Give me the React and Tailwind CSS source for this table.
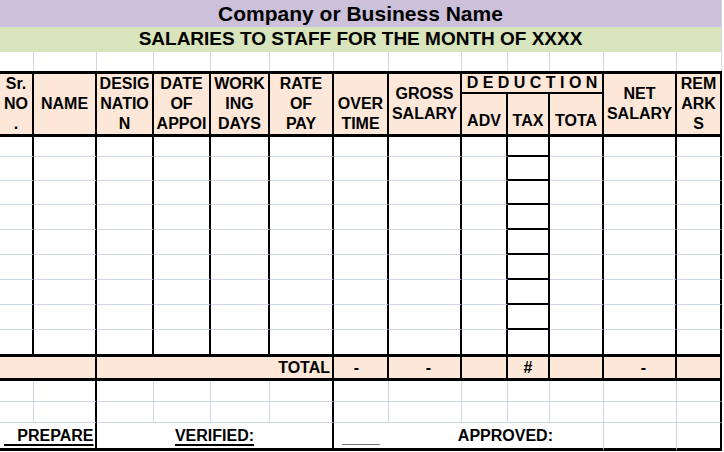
const grid = "#d0d7e5";

const headCols = [
  { lines: ["Sr.", "NO", "."] },
  { lines: ["NAME"] },
  { lines: ["DESIG", "NATIO", "N"] },
  { lines: ["DATE", "OF", "APPOI"] },
  { lines: ["WORK", "ING", "DAYS"] },
  { lines: ["RATE", "OF", "PAY"] },
  { lines: ["OVER", "TIME"], bottom: true },
  { lines: ["GROSS", "SALARY"] },
];

const dataRows = Array.from({ length: 9 }, (_, i) => i);
const cols = Array.from({ length: 13 }, (_, i) => i);

function HeadCell({ lines, bottom, className = "" }) {
  return (
    <div
      className={`flex flex-col items-center overflow-hidden border-t-[3px] border-b-[3px] border-r-2 border-black bg-[#fce7d9] leading-[20px] ${
        bottom ? "justify-end" : "justify-center"
      } ${className}`}
    >
      {lines.map((l) => (
        <span key={l} className="whitespace-nowrap">
          {l}
        </span>
      ))}
    </div>
  );
}

export default function App() {
  return (
    <div className="w-[724px] h-[452px] overflow-hidden bg-white font-['Liberation_Sans',Arial,sans-serif] font-bold text-black text-[16px]">
      <div className="grid w-[722px] grid-cols-[34px_63px_57px_57px_59px_64px_55px_73px_46px_42px_54px_73px_45px] grid-rows-[27px_25px_19px_23px_21px_22px_20px_24px_24px_25px_25px_25px_25px_25px_24px_27px_21px_21px_28px]">
        {/* title rows */}
        <div className="col-span-13 flex items-center justify-center bg-[#ccc0da] text-[21px] border-r border-r-[#d0d7e5]">
          Company or Business Name
        </div>
        <div className="col-span-13 flex items-center justify-center bg-[#d8e4bc] text-[19px] border-r border-r-[#d0d7e5]">
          SALARIES TO STAFF FOR THE MONTH OF XXXX
        </div>
        {cols.map((c) => (
          <div key={"b" + c} className="border-r border-r-[#d0d7e5]" />
        ))}

        {/* header */}
        {headCols.map((h, i) => (
          <HeadCell key={i} lines={h.lines} bottom={h.bottom} className="row-span-3" />
        ))}
        <div className="col-span-3 flex items-center justify-center border-t-[3px] border-b-2 border-r-2 border-black bg-[#fce7d9] whitespace-pre">
          D E D U C T I O N
        </div>
        <HeadCell lines={["NET", "SALARY"]} className="row-span-3" />
        <HeadCell lines={["REM", "ARK", "S"]} className="row-span-3" />
        <div className="row-span-2 flex items-end justify-center border-b-[3px] border-r-2 border-black bg-[#fce7d9] pb-[1px]">
          ADV
        </div>
        <div className="row-span-2 flex items-end justify-center border-b-[3px] border-r-2 border-black bg-[#fce7d9] pb-[1px]">
          TAX
        </div>
        <div className="row-span-2 flex items-end justify-center border-b-[3px] border-r-2 border-black bg-[#fce7d9] pb-[1px]">
          TOTA
        </div>

        {/* data rows */}
        {dataRows.map((r) =>
          cols.map((c) => (
            <div
              key={r + "-" + c}
              className={`border-r-2 border-r-black ${
                r === 8
                  ? ""
                  : c === 9
                  ? "border-b-2 border-b-black"
                  : "border-b border-b-[#d0d7e5]"
              }`}
            />
          ))
        )}

        {/* total row */}
        <div className="col-span-2 border-y-[3px] border-r-2 border-black bg-[#fce7d9]" />
        <div className="col-span-4 flex items-center justify-end border-y-[3px] border-r-2 border-black bg-[#fce7d9] pr-[2px]">
          TOTAL
        </div>
        <div className="flex items-center justify-center border-y-[3px] border-r-2 border-black bg-[#fce7d9] pr-[8px]">
          -
        </div>
        <div className="flex items-center justify-center border-y-[3px] border-r-2 border-black bg-[#fce7d9] pl-[8px]">
          -
        </div>
        <div className="border-y-[3px] border-r-2 border-black bg-[#fce7d9]" />
        <div className="flex items-center justify-center border-y-[3px] border-r-2 border-black bg-[#fce7d9]">
          #
        </div>
        <div className="border-y-[3px] border-r-2 border-black bg-[#fce7d9]" />
        <div className="flex items-center justify-center border-y-[3px] border-r-2 border-black bg-[#fce7d9] pl-[8px]">
          -
        </div>
        <div className="border-y-[3px] border-r-2 border-black bg-[#fce7d9]" />

        {/* blank rows under total */}
        {[0, 1].map((r) =>
          cols.map((c) => (
            <div
              key={"f" + r + c}
              className={`border-b border-b-[#d0d7e5] ${
                c === 1 || c === 5 || c === 12
                  ? "border-r-2 border-r-black"
                  : "border-r border-r-[#d0d7e5]"
              }`}
            />
          ))
        )}

        {/* signature row */}
        <div className="col-span-2 flex items-center overflow-hidden border-b-[3px] border-r-2 border-black pl-[4px]">
          <span className="whitespace-pre underline decoration-2 underline-offset-[3px]">
            {"   PREPARE"}
          </span>
        </div>
        <div className="col-span-4 flex items-center justify-center border-b-[3px] border-r-2 border-black">
          <span className="underline decoration-2 underline-offset-[3px]">VERIFIED:</span>
        </div>
        <div className="col-span-5 flex items-center border-b-[3px] border-b-black border-r border-r-[#d0d7e5] pl-[8px]">
          <span className="text-[17px] leading-none pt-[4px]">____</span>
          <span className="ml-[78px]">APPROVED:</span>
        </div>
        <div className="border-b-[3px] border-b-black border-r border-r-[#d0d7e5]" />
        <div className="border-b-[3px] border-r-2 border-black" />
      </div>
    </div>
  );
}
